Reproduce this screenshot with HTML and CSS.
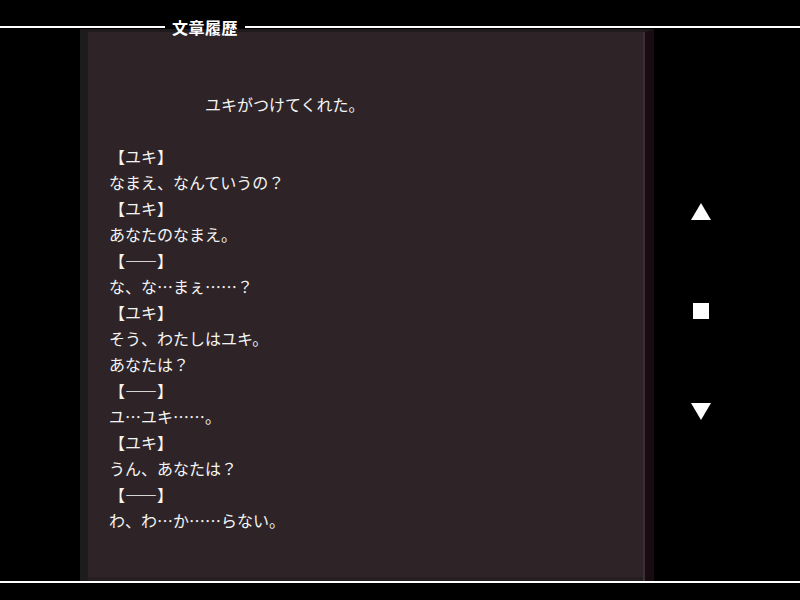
FILE: index.html
```html
<!DOCTYPE html>
<html lang="ja">
<head>
<meta charset="utf-8">
<title>文章履歴</title>
<link rel="stylesheet" href="styles.css">
</head>
<body>
<div class="screen">
  <div class="top">
    <div class="title-row">
      <span class="rule rule-left"></span>
      <span class="title">文章履歴</span>
      <span class="rule"></span>
    </div>
  </div>
  <div class="main">
    <div class="panel">
      <div class="log">
        <p class="line narration">ユキがつけてくれた。</p>
        <p class="line blank">&nbsp;</p>
        <p class="line">【ユキ】</p>
        <p class="line">なまえ、なんていうの？</p>
        <p class="line">【ユキ】</p>
        <p class="line">あなたのなまえ。</p>
        <p class="line">【――】</p>
        <p class="line">な、な…まぇ……？</p>
        <p class="line">【ユキ】</p>
        <p class="line">そう、わたしはユキ。</p>
        <p class="line">あなたは？</p>
        <p class="line">【――】</p>
        <p class="line">ユ…ユキ……。</p>
        <p class="line">【ユキ】</p>
        <p class="line">うん、あなたは？</p>
        <p class="line">【――】</p>
        <p class="line">わ、わ…か……らない。</p>
      </div>
    </div>
    <div class="controls">
      <svg class="btn tri" width="20" height="17" viewBox="0 0 20 17"><polygon points="10,0 20,17 0,17" fill="#fff"/></svg>
      <svg class="btn sq" width="16" height="16" viewBox="0 0 16 16"><rect x="0" y="0" width="16" height="16" fill="#fff"/></svg>
      <svg class="btn tri-down" width="20" height="17" viewBox="0 0 20 17"><polygon points="0,0 20,0 10,17" fill="#fff"/></svg>
    </div>
  </div>
  <div class="bottom-rule"></div>
</div>
</body>
</html>
```

FILE: styles.css
```css
html, body {
  margin: 0;
  padding: 0;
  background: #000;
}
body {
  font-family: "Noto Sans CJK JP", "Noto Sans", sans-serif;
  color: #fff;
}
.screen {
  width: 800px;
  height: 600px;
  display: flex;
  flex-direction: column;
  overflow: hidden;
}
.top {
  height: 29px;
  padding-top: 17px;
  box-sizing: border-box;
  position: relative;
  z-index: 2;
}
.title-row {
  display: flex;
  align-items: center;
  height: 20px;
}
.rule {
  flex: 1;
  height: 2px;
  background: #fff;
}
.rule-left {
  flex: 0 0 165px;
}
.title {
  font-weight: bold;
  font-size: 16px;
  line-height: 20px;
  padding: 0 7px;
  letter-spacing: 0.5px;
  color: #fff;
}
.main {
  display: flex;
  height: 552px;
}
.panel {
  margin-left: 80px;
  width: 574px;
  box-sizing: border-box;
  background: #2e2428;
  border-left: 8px solid #1c1c1c;
  border-top: 3px solid #1f1b1d;
  border-right: 9px solid #180c12;
  box-shadow: inset -2px 0 0 #3a3034, inset 0 -4px 0 #261e21;
}
.log {
  padding: 59px 0 0 21px;
}
.line {
  margin: 0;
  font-size: 16px;
  line-height: 26px;
  white-space: nowrap;
  color: #f4f4f4;
}
.narration {
  padding-left: 96px;
}
.controls {
  width: 94px;
  display: flex;
  flex-direction: column;
  align-items: center;
  padding-top: 174px;
}
.btn {
  display: block;
}
.sq {
  margin-top: 83px;
}
.tri-down {
  margin-top: 84px;
}
.bottom-rule {
  height: 2px;
  background: #fff;
  margin-top: 0;
}
```
